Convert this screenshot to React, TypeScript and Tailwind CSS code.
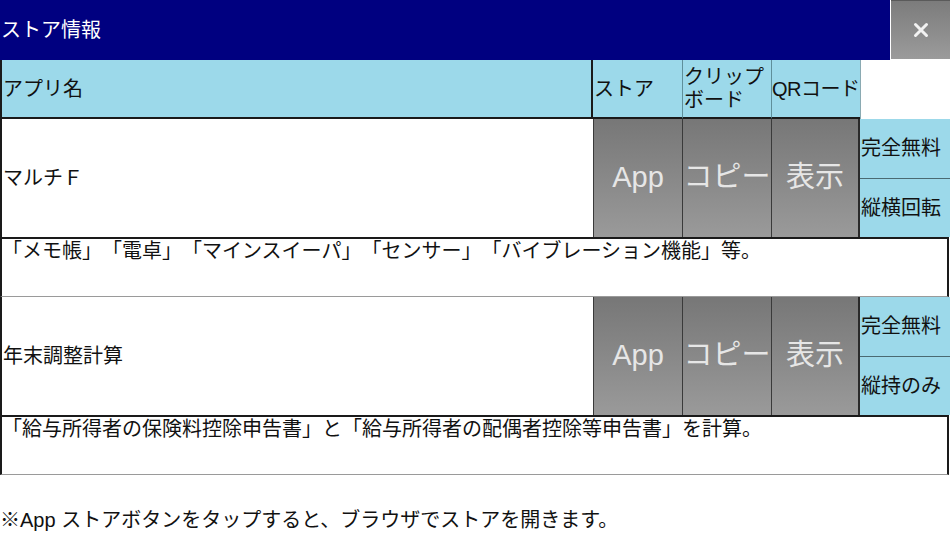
import React from "react";

const font = { fontFamily: '"Liberation Sans", "Noto Sans CJK JP", sans-serif' };

function Btn({ label, last }: { label: string; last?: boolean }) {
  return (
    <div
      className={`w-[89px] flex items-center justify-center bg-gradient-to-b from-[#777777] to-[#9a9a9a] text-[#e6e6e6] text-[29px] border-l border-[#3a3a3a] ${last ? "border-r-2 border-r-[#2a2a2a]" : ""}`}
    >
      {label}
    </div>
  );
}

function AppRow({ name, tags, desc }: { name: string; tags: [string, string]; desc: string }) {
  return (
    <>
      <div className="flex h-[118px]">
        <div className="w-[593px] bg-white border-l-2 border-[#1a1a1a] flex items-center pl-px text-[20px] text-[#111]">
          {name}
        </div>
        <Btn label="App" />
        <Btn label="コピー" />
        <Btn label="表示" last />
        <div className="flex-1 flex flex-col">
          <div className="flex-1 bg-[#9cd9ea] border-b border-[#4a6a72] flex items-center pl-[1px] text-[20px] text-[#111]">
            {tags[0]}
          </div>
          <div className="flex-1 bg-[#9cd9ea] flex items-center pl-[1px] text-[20px] text-[#111]">
            {tags[1]}
          </div>
        </div>
      </div>
      <div className="h-[60px] bg-white border-l-2 border-r-2 border-t-2 border-b border-l-[#1a1a1a] border-r-[#1a1a1a] border-t-[#1a1a1a] border-b-[#9a9a9a] mr-[1px] text-[20px] leading-[24px] text-[#111] [text-spacing-trim:space-all] whitespace-nowrap">
        {desc}
      </div>
    </>
  );
}

export default function App() {
  return (
    <div className="w-[950px] h-[534px] bg-white overflow-hidden" style={font}>
      <div className="flex h-[60px]">
        <div className="flex-1 bg-[#000080] flex items-center text-white text-[20px] pl-px">ストア情報</div>
        <div className="w-[59px] h-[59px] ml-px bg-gradient-to-b from-[#7c7c7c] to-[#9b9b9b] border-t border-[#5a5a5a] flex items-center justify-center">
          <svg width="16" height="16" viewBox="0 0 16 16">
            <path d="M2.5 2.5 L13.5 13.5 M13.5 2.5 L2.5 13.5" stroke="#f2f2f2" strokeWidth="3" strokeLinecap="round" />
          </svg>
        </div>
      </div>
      <div className="flex h-[59px] text-[20px] text-[#111]">
        <div className="w-[593px] bg-[#9cd9ea] border-l-2 border-r-2 border-b-2 border-[#1a1a1a] flex items-center pl-px">アプリ名</div>
        <div className="w-[89px] bg-[#9cd9ea] border-b-2 border-[#1a1a1a] flex items-center pl-px">ストア</div>
        <div className="w-[89px] bg-[#9cd9ea] border-l border-b-2 border-l-[#5f8f9a] border-b-[#1a1a1a] flex items-center pl-px leading-[23px]">
          クリップ
          <br />
          ボード
        </div>
        <div className="w-[89px] bg-[#9cd9ea] border-l border-b-2 border-l-[#5f8f9a] border-b-[#1a1a1a] flex items-center whitespace-nowrap overflow-visible tracking-[-0.5px]">QRコード</div>
        <div className="flex-1 bg-white border-l border-[#8aaab2]"></div>
      </div>
      <AppRow
        name="マルチＦ"
        tags={["完全無料", "縦横回転"]}
        desc="「メモ帳」「電卓」「マインスイーパ」「センサー」「バイブレーション機能」等。"
      />
      <AppRow
        name="年末調整計算"
        tags={["完全無料", "縦持のみ"]}
        desc="「給与所得者の保険料控除申告書」と「給与所得者の配偶者控除等申告書」を計算。"
      />
      <div className="pt-[29px] text-[20px] text-[#111] [text-spacing-trim:space-all]">
        <span style={{ fontFamily: '"Noto Sans CJK JP", sans-serif' }}>※</span>App ストアボタンをタップすると、ブラウザでストアを開きます。
      </div>
    </div>
  );
}
